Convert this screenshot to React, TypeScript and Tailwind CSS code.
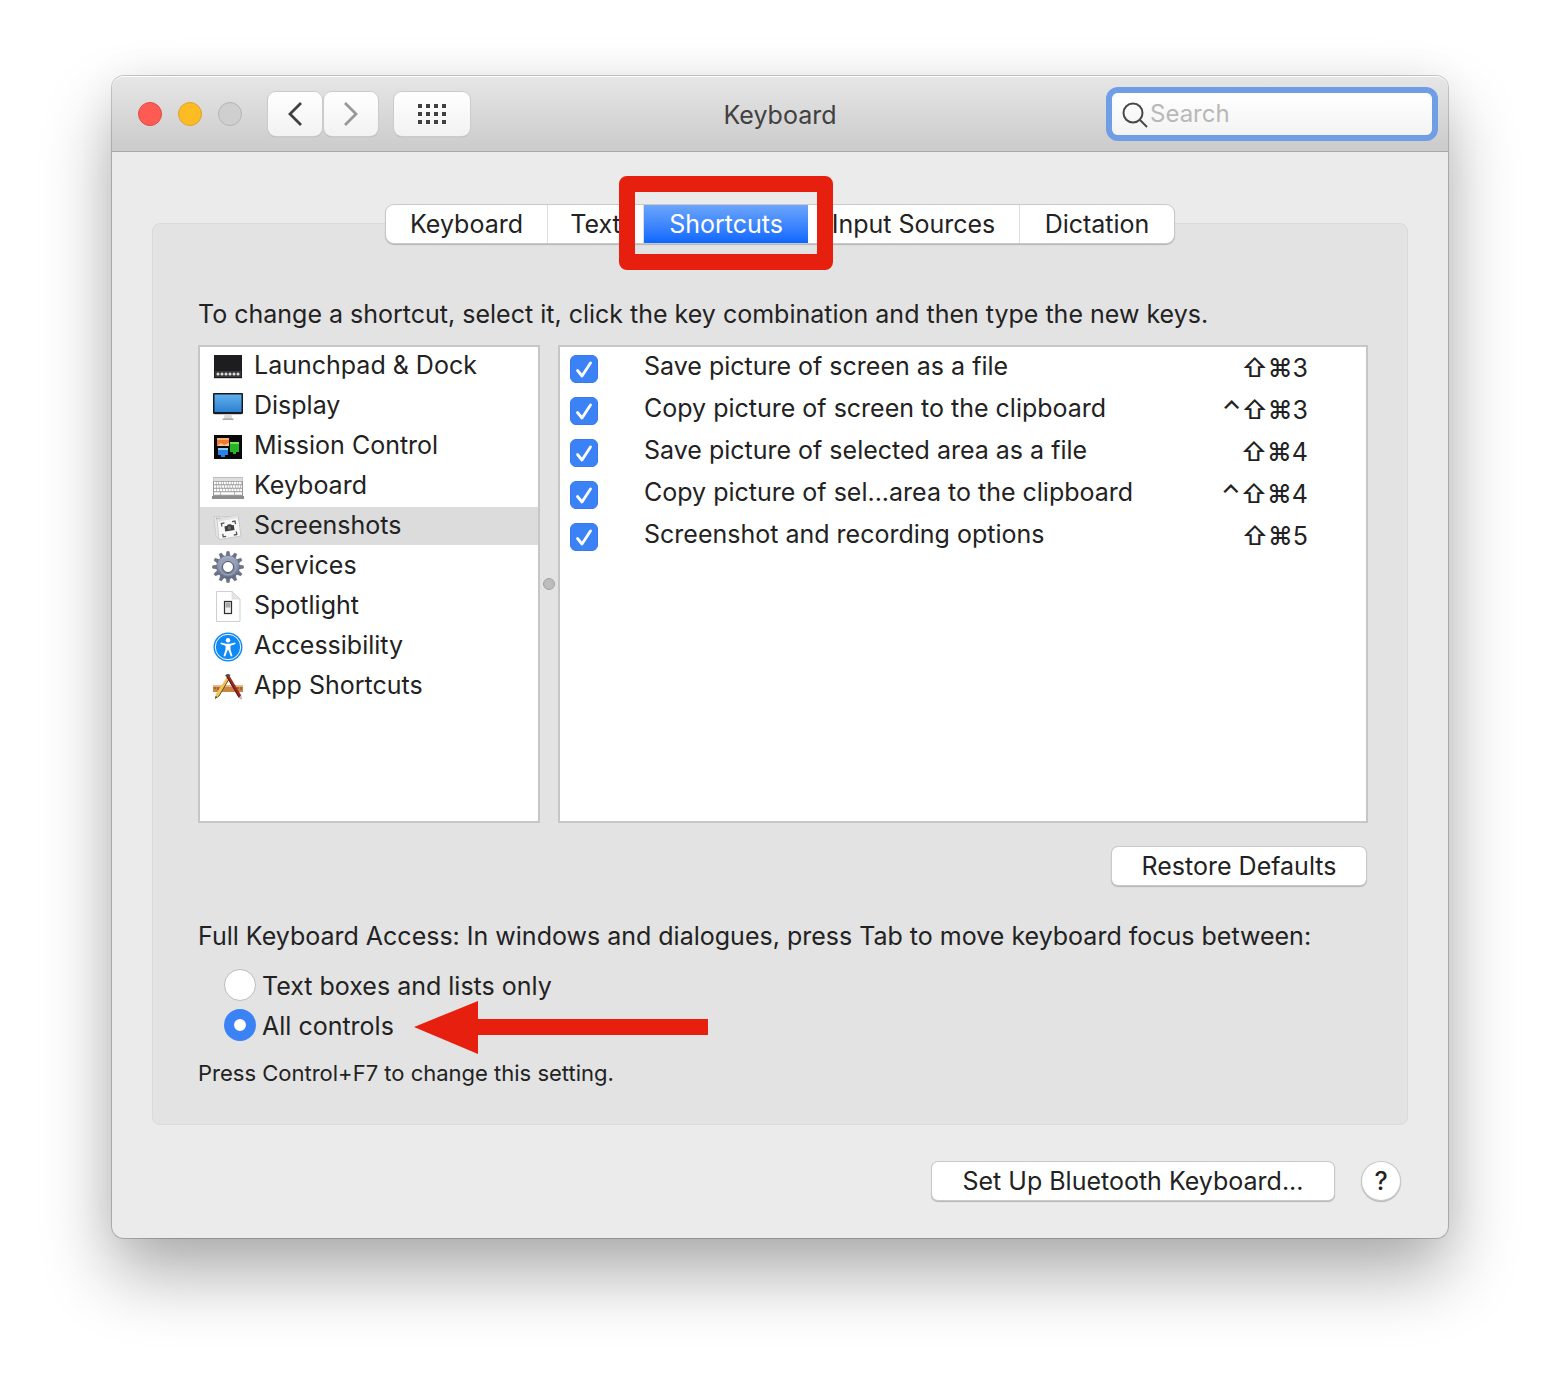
import React, { useState } from "react";
import clsx from "clsx";

const LaunchpadIcon = () => (
  <svg viewBox="0 0 32 32" className="size-8">
    <rect x="2" y="5" width="28" height="23" fill="#d0d0d0" />
    <rect x="2" y="4" width="28" height="23" fill="#1d1d1f" />
    <rect x="3" y="20" width="26" height="6" fill="#3a3a3c" />
    <g fill="#dddddd">
      <circle cx="6" cy="23" r="1.500" />
      <circle cx="10" cy="23" r="1.500" />
      <circle cx="14" cy="23" r="1.500" />
      <circle cx="18" cy="23" r="1.500" />
      <circle cx="22" cy="23" r="1.500" />
      <circle cx="26" cy="23" r="1.500" />
    </g>
  </svg>
);

const DisplayIcon = () => (
  <svg viewBox="0 0 32 32" className="size-8">
    <defs>
      <linearGradient id="screen" x1="0" y1="0" x2="0" y2="1">
        <stop offset="0" stopColor="#5eb0ec" />
        <stop offset="1" stopColor="#2f80d0" />
      </linearGradient>
    </defs>
    <rect x="1" y="2" width="30" height="21" rx="1" fill="#161a20" />
    <rect x="2.500" y="3.500" width="27" height="17.500" fill="url(#screen)" />
    <path d="M2 23h28l-1 1H3z" fill="#cfcfcf" />
    <path d="M12.500 24h7l.8 4h-8.600z" fill="#d9d9d9" />
    <path d="M10.500 28.200h11" stroke="#a2a2a2" strokeWidth="1.400" />
  </svg>
);

const MissionControlIcon = () => (
  <svg viewBox="0 0 32 32" className="size-8">
    <rect x="2" y="4" width="28" height="24" fill="#07080a" />
    <path d="M5 7h12v8H5z" fill="#ef7b32" />
    <path d="M5 7h12v2H5z" fill="#ffb06b" />
    <path d="M9 12l3 2 5-2v3H5z" fill="#ffc39a" />
    <path d="M18 11h9v10h-3v2h-3v-2h-3z" fill="#25b425" />
    <path d="M18 11h9v2h-9z" fill="#79e05c" />
    <path d="M6 17h10v7h-3v2h-4v-2H6z" fill="#2a83e4" />
    <path d="M6 17h10v2H6z" fill="#93cbff" />
  </svg>
);

const KeyboardIcon = () => (
  <svg viewBox="0 0 32 32" className="size-8">
    <path d="M1 6h30v20.500H1z" fill="#bdbdbd" />
    <path d="M0 25h32v3H0z" fill="#8d8d8d" />
    <path d="M1.500 7h29v3h-29z" fill="#dddddd" />
    <path d="M1 10h30v15H1z" fill="#989898" />
    <g stroke="#ffffff" strokeWidth="2.500">
      <path d="M2 12h28" strokeDasharray="1.900 .6" />
      <path d="M2 15.500h28" strokeDasharray="2.100 .6" />
      <path d="M2 19h28" strokeDasharray="2.300 .6" />
      <path d="M2 22.500h6M8.700 22.500h13.300M22.700 22.500h7.300" />
    </g>
  </svg>
);

const ScreenshotsIcon = () => (
  <svg viewBox="0 0 32 32" className="size-8">
    <path d="M2 5.500h24l1 4L6 27l-2-2z" fill="#e9e9e9" stroke="#bdbdbd" strokeWidth=".6" />
    <g fill="#b0b0b0">
      <circle cx="4.800" cy="7.500" r=".9" />
      <circle cx="7.400" cy="7.500" r=".9" />
    </g>
    <path d="M5 8.500l21-4.500 3 21-22 3.500z" fill="#f7f7f7" stroke="#b9b9b9" strokeWidth=".7" />
    <path d="M5 8.500l21-4.500.4 2.800-21 4.200z" fill="#e2e2e2" />
    <g fill="none" stroke="#555555" strokeWidth="1.300">
      <path d="M9.800 15.500l-.4-3 3-.6M20 10.600l3-.5.5 3M24.300 20.500l.5 3-3 .5M14.200 25.300l-3 .5-.5-3" />
    </g>
    <path d="M12.500 15.200l2.300-.3 1-1.300 3-.4 1.200 1 1.800-.1.700 5-9.300 1.300z" fill="#3d3d3d" />
    <circle cx="17.400" cy="16.900" r="1.800" fill="#666666" />
  </svg>
);

const ServicesIcon = () => (
  <svg viewBox="-16 -16 32 32" className="size-8">
    <defs>
      <linearGradient id="gear" x1="0" y1="0" x2="0" y2="1">
        <stop offset="0" stopColor="#a9b2ca" />
        <stop offset="1" stopColor="#626b84" />
      </linearGradient>
    </defs>
    <g fill="#6d7488" stroke="#4c5264" strokeWidth=".4">
      {[0, 30, 60, 90, 120, 150, 180, 210, 240, 270, 300, 330].map((angle) => (
        <path key={angle} d="M-2.200 -10l1-5.500h2.400l1 5.500z" transform={`rotate(${angle})`} />
      ))}
    </g>
    <circle r="11.500" fill="url(#gear)" stroke="#596077" strokeWidth=".5" />
    <circle r="8" fill="none" stroke="#97a1bb" strokeWidth="1.500" />
    <circle r="5.500" fill="#ffffff" stroke="#505669" strokeWidth="1" />
  </svg>
);

const SpotlightIcon = () => (
  <svg viewBox="0 0 32 32" className="size-8">
    <path d="M4.500 .5h15.500l8 7.500v22.500H4.500z" fill="#fefefe" stroke="#cfcfcf" />
    <path d="M20 .5l8 7.500h-8z" fill="#e6e6e6" stroke="#d4d4d4" strokeWidth=".6" />
    <rect x="12.500" y="10.500" width="7" height="12" fill="#f2f2f2" stroke="#2f2f2f" strokeWidth="1.200" />
    <path d="M13.500 11.500h5v5h-5z" fill="#a9a9a9" />
  </svg>
);

const AccessibilityIcon = () => (
  <svg viewBox="0 0 32 32" className="size-8">
    <circle cx="16" cy="16" r="14.500" fill="#1089f5" />
    <circle cx="16" cy="16" r="12.700" fill="none" stroke="#ffffff" strokeWidth="1" />
    <circle cx="16" cy="9.200" r="2.200" fill="#ffffff" />
    <path
      d="M8.800 11.600l5.200 1.200h4l5.200-1.200.3 1.500-5 1.600v3.800l2 6.400-1.700.6-2.600-6.700h-.4l-2.600 6.700-1.700-.6 2-6.400v-3.800l-5-1.600z"
      fill="#ffffff"
    />
  </svg>
);

const AppShortcutsIcon = () => (
  <svg viewBox="0 0 32 32" className="size-8">
    <path d="M1 14.500h30v6.500H1z" fill="#c98545" />
    <path d="M1 14.500h30v1.500H1z" fill="#e6b27c" />
    <path d="M3 16v2M6 16v3M9 16v2M23 16v3M26 16v2M29 16v3" stroke="#6c3f18" strokeWidth=".8" />
    <path d="M15.500 5l2 2L7 25l-4 3 .8-4.800z" fill="#f0c552" />
    <path d="M17.500 7L7 25l-1.300 1" fill="none" stroke="#6b4a20" strokeWidth="1" />
    <path d="M3 28l.6-3 2 1.200z" fill="#333333" />
    <path d="M14 5l3-1 12 20 .5 4.500-3-2z" fill="#9c2721" />
    <path d="M15 6l12 20" stroke="#4b1512" strokeWidth=".9" />
    <path d="M13 5c1-2 3-3 5.500-1l-2 2z" fill="#4b4b4b" />
    <path d="M27 26.500l2.500 2-.4-4z" fill="#c7c7c7" />
  </svg>
);

const categories = [
  { name: "Launchpad & Dock", Icon: LaunchpadIcon },
  { name: "Display", Icon: DisplayIcon },
  { name: "Mission Control", Icon: MissionControlIcon },
  { name: "Keyboard", Icon: KeyboardIcon },
  { name: "Screenshots", Icon: ScreenshotsIcon },
  { name: "Services", Icon: ServicesIcon },
  { name: "Spotlight", Icon: SpotlightIcon },
  { name: "Accessibility", Icon: AccessibilityIcon },
  { name: "App Shortcuts", Icon: AppShortcutsIcon },
];

const shortcuts = [
  { label: "Save picture of screen as a file", mods: "⇧⌘", digit: "3" },
  { label: "Copy picture of screen to the clipboard", mods: "⌃⇧⌘", digit: "3" },
  { label: "Save picture of selected area as a file", mods: "⇧⌘", digit: "4" },
  { label: "Copy picture of sel...area to the clipboard", mods: "⌃⇧⌘", digit: "4" },
  { label: "Screenshot and recording options", mods: "⇧⌘", digit: "5" },
];

const tabs = [
  { name: "Keyboard", width: "w-[162px]" },
  { name: "Text", width: "w-[96px]" },
  { name: "Shortcuts", width: "w-[164px]" },
  { name: "Input Sources", width: "w-[212px]" },
  { name: "Dictation", width: "w-[154px]" },
];

const accessOptions = ["Text boxes and lists only", "All controls"];

const TitleBar: React.FC = () => (
  <header className="flex h-[76px] items-center justify-between rounded-t-xl border-t border-b border-t-white border-b-[#a9a9a9] bg-linear-to-b from-[#e6e6e6] to-[#cbcbcb] px-4">
    <div className="flex flex-1 items-center">
      <div className="ml-2.5 flex gap-4">
        <button aria-label="Close" className="size-6 rounded-full border border-[#df4a43] bg-[#ff5b54]" />
        <button aria-label="Minimise" className="size-6 rounded-full border border-[#dea032] bg-[#fdbb24]" />
        <button aria-label="Zoom" className="size-6 rounded-full border border-[#b4b4b4] bg-[#cfcfcf]" />
      </div>
      <div className="ml-[26px] flex gap-0.5">
        <button
          aria-label="Back"
          className="flex h-11 w-[54px] items-center justify-center rounded-lg bg-linear-to-b from-white to-[#f2f2f2] shadow-[0_0_0_1px_#cbcbcb,0_1px_1px_0_#a0a0a0]"
        >
          <svg viewBox="0 0 16 26" className="h-[26px] w-4" fill="none" stroke="#404040" strokeWidth="2.800">
            <path d="M14 2L3 13l11 11" />
          </svg>
        </button>
        <button
          aria-label="Forward"
          className="flex h-11 w-[54px] items-center justify-center rounded-lg bg-linear-to-b from-white to-[#f2f2f2] shadow-[0_0_0_1px_#cbcbcb,0_1px_1px_0_#a0a0a0]"
        >
          <svg viewBox="0 0 16 26" className="h-[26px] w-4" fill="none" stroke="#989898" strokeWidth="2.800">
            <path d="M2 2l11 11L2 24" />
          </svg>
        </button>
      </div>
      <button
        aria-label="Show All"
        className="ml-4 flex h-11 w-[76px] items-center justify-center rounded-lg bg-linear-to-b from-white to-[#f2f2f2] shadow-[0_0_0_1px_#cbcbcb,0_1px_1px_0_#a0a0a0]"
      >
        <svg viewBox="0 0 28 20" className="h-5 w-7" stroke="#404040" strokeWidth="4" strokeDasharray="4 4">
          <path d="M0 2h28M0 10h28M0 18h28" />
        </svg>
      </button>
    </div>
    <h1 className="pt-0.5 text-[25px] text-[#414141]">Keyboard</h1>
    <div className="flex flex-1 justify-end">
      <label className="flex h-[42px] w-[320px] items-center gap-0.5 rounded-md bg-linear-to-b from-white to-[#f3f3f3] pl-2 shadow-[0_0_0_6px_#6f9de6]">
        <svg viewBox="0 0 28 28" className="size-7 shrink-0" fill="none" stroke="#484848" strokeWidth="2">
          <circle cx="13" cy="13" r="9.500" />
          <path d="M20 20l7 7" />
        </svg>
        <input
          type="search"
          aria-label="Search"
          placeholder="Search"
          className="w-full min-w-0 bg-transparent text-2xl outline-none placeholder:text-[#b8b8b8]"
        />
      </label>
    </div>
  </header>
);

const App: React.FC = () => {
  const [selected, setSelected] = useState("Screenshots");
  const [access, setAccess] = useState("All controls");

  return (
    <div className="min-h-screen bg-white px-28 pt-19 pb-[148px] font-['Inter',sans-serif] text-[25px] leading-8 text-[#222222]">
      <main className="rounded-xl bg-[#ebebeb] shadow-[0_0_0_1px_rgba(0,0,0,0.2),0_36px_70px_rgba(0,0,0,0.32),0_0_40px_rgba(0,0,0,0.05)]">
        <TitleBar />

        <div className="px-10 pt-[53px] pb-[38px]">
          <nav className="relative z-10 mx-auto flex h-[38px] w-fit rounded-lg bg-white shadow-[0_0_0_1px_#c9c9c9,0_1px_1px_1px_#b4b4b4]">
            {tabs.map((tab) => (
              <div
                key={tab.name}
                className={clsx(
                  "relative",
                  tab.name === "Shortcuts" ? "z-10" : "border-r border-[#dddddd] last:border-r-0",
                  tab.width,
                )}
              >
                <button
                  className={clsx(
                    "size-full",
                    tab.name === "Shortcuts" && "bg-linear-to-b from-[#6ba5fb] to-[#0a66ff] text-white",
                  )}
                >
                  {tab.name}
                </button>
                {tab.name === "Shortcuts" && (
                  <div className="pointer-events-none absolute -inset-x-[25px] -top-[29px] -bottom-[27px] rounded-lg border-16 border-[#e71f0e]" />
                )}
              </div>
            ))}
          </nav>

          <section className="-mt-5 rounded-lg border border-[#dadada] bg-[#e3e3e3] pt-[74px] pr-[39px] pb-[34px] pl-[45px]">
            <p>To change a shortcut, select it, click the key combination and then type the new keys.</p>

            <div className="mt-[15px] flex h-[478px] items-stretch">
              <ul className="flex w-[342px] shrink-0 flex-col gap-0.5 border-2 border-[#c6c6c6] bg-white">
                {categories.map(({ name, Icon }) => (
                  <li key={name}>
                    <button
                      onClick={() => setSelected(name)}
                      className={clsx(
                        "flex h-[38px] w-full items-center gap-2.5 pl-3",
                        selected === name && "bg-[#dcdcdc]",
                      )}
                    >
                      <span className="pt-0.5">
                        <Icon />
                      </span>
                      <span className="pb-0.5">{name}</span>
                    </button>
                  </li>
                ))}
              </ul>

              <div className="flex w-[18px] items-center justify-center">
                <span className="size-3 shrink-0 rounded-full border border-[#a3a3a3] bg-[#bcbcbc]" />
              </div>

              <div className="flex-1 border-2 border-[#c6c6c6] bg-white">
                <table className="w-full">
                  <tbody>
                    {shortcuts.map((shortcut, index) => (
                      <tr key={shortcut.label} className="h-[42px]">
                        <td className="w-[84px] pt-0.5 pl-2.5">
                          <span className="relative block size-7">
                            <input
                              type="checkbox"
                              id={`shortcut-${index}`}
                              defaultChecked
                              className="peer block size-7 appearance-none rounded-md border border-[#b5b5b5] bg-white checked:border-[#3a78ec] checked:bg-[#3b82f7]"
                            />
                            <svg
                              viewBox="0 0 28 28"
                              className="pointer-events-none absolute inset-0 hidden size-7 peer-checked:block"
                              fill="none"
                              stroke="#ffffff"
                              strokeWidth="2.800"
                              strokeLinecap="round"
                              strokeLinejoin="round"
                            >
                              <path d="M7.500 15.500l4.500 5.500L20.500 8" />
                            </svg>
                          </span>
                        </td>
                        <td className="pb-1">
                          <label htmlFor={`shortcut-${index}`}>{shortcut.label}</label>
                        </td>
                        <td className="pr-[58px] text-right">
                          <kbd className="font-['Inter','DejaVu_Sans',sans-serif]">
                            <span className="font-medium">{shortcut.mods}</span>
                            {shortcut.digit}
                          </kbd>
                        </td>
                      </tr>
                    ))}
                  </tbody>
                </table>
              </div>
            </div>

            <div className="mt-6 flex justify-end pr-0.5">
              <button className="h-[38px] w-[254px] rounded-md bg-white shadow-[0_0_0_1px_#c9c9c9,0_1px_1px_1px_#b4b4b4]">
                Restore Defaults
              </button>
            </div>

            <fieldset className="mt-[35px]">
              <legend>Full Keyboard Access: In windows and dialogues, press Tab to move keyboard focus between:</legend>
              <div className="mt-[17px] flex flex-col gap-2 pl-[26px]">
                {accessOptions.map((option) => (
                  <div key={option} className="flex h-8 items-center">
                    <label className="flex items-center gap-1.5">
                      <input
                        type="radio"
                        name="access"
                        checked={access === option}
                        onChange={() => setAccess(option)}
                        className="size-8 appearance-none rounded-full border border-[#bcbcbc] bg-white checked:border-10 checked:border-[#3b82f7]"
                      />
                      <span className="pt-0.5">{option}</span>
                    </label>
                    {option === "All controls" && (
                      <svg viewBox="0 0 294 58" className="ml-5 h-[58px] w-[294px]" fill="#e71f0e">
                        <path d="M0 31L64 5v18h230v16H64v19z" />
                      </svg>
                    )}
                  </div>
                ))}
              </div>
            </fieldset>
            <p className="mt-4 pb-px text-[22px]">Press Control+F7 to change this setting.</p>
          </section>

          <footer className="mt-[37px] flex items-center justify-end gap-7 pr-2">
            <button className="h-[38px] w-[402px] rounded-md bg-white shadow-[0_0_0_1px_#c9c9c9,0_1px_1px_1px_#b4b4b4]">
              Set Up Bluetooth Keyboard...
            </button>
            <button
              aria-label="Help"
              className="size-[38px] rounded-full bg-white font-medium shadow-[0_0_0_1px_#c9c9c9,0_1px_1px_1px_#b4b4b4]"
            >
              ?
            </button>
          </footer>
        </div>
      </main>
    </div>
  );
};

export default App;
